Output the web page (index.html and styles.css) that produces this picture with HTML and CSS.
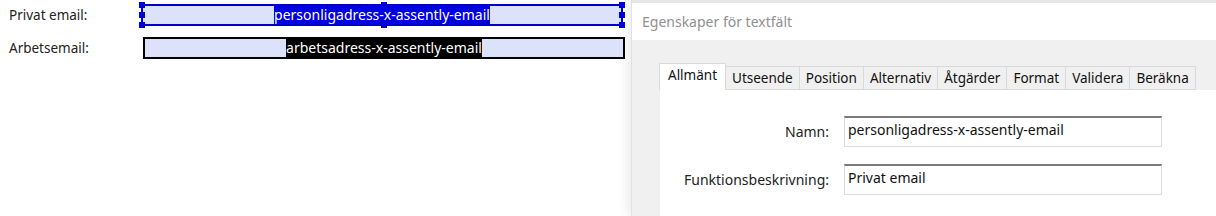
FILE: index.html
```html
<!DOCTYPE html>
<html>
<head>
  <meta charset="utf-8">
  <title>Egenskaper för textfält</title>
  <link rel="stylesheet" href="styles.css">
</head>
<body>
  <!-- Form page behind the dialog -->
  <div class="page">
    <div class="row">
      <div class="label">Privat email:</div>
      <div class="field selected">
        <span class="value sel-blue">personligadress-x-assently-email</span>
        <span class="handle h-tl"></span>
        <span class="handle h-ml"></span>
        <span class="handle h-bl"></span>
        <span class="handle h-tm"></span>
        <span class="handle h-bm"></span>
        <span class="handle h-tr"></span>
        <span class="handle h-mr"></span>
        <span class="handle h-br"></span>
      </div>
    </div>
    <div class="row">
      <div class="label">Arbetsemail:</div>
      <div class="field black">
        <span class="value sel-black">arbetsadress-x-assently-email</span>
      </div>
    </div>
  </div>

  <!-- Properties dialog -->
  <div class="dialog">
    <div class="dialog-title">Egenskaper för textfält</div>
    <div class="dialog-body">
      <div class="tabs">
        <div class="tab active">Allmänt</div>
        <div class="tab">Utseende</div>
        <div class="tab">Position</div>
        <div class="tab">Alternativ</div>
        <div class="tab">Åtgärder</div>
        <div class="tab">Format</div>
        <div class="tab">Validera</div>
        <div class="tab">Beräkna</div>
      </div>
      <div class="panel">
        <div class="prop">
          <div class="prop-label">Namn:</div>
          <div class="input">personligadress-x-assently-email</div>
        </div>
        <div class="prop">
          <div class="prop-label">Funktionsbeskrivning:</div>
          <div class="input">Privat email</div>
        </div>
      </div>
    </div>
  </div>
</body>
</html>
```
FILE: styles.css
```css
body {
  margin: 0;
  padding: 0;
  width: 1216px;
  height: 216px;
  overflow: hidden;
  display: flex;
  background-color: #fff;
  font-family: "Noto Sans", "Open Sans", sans-serif;
}

.page {
  width: 631px;
  padding-top: 4px;
  display: flex;
  flex-direction: column;
  gap: 11px;
}

.row {
  display: flex;
  align-items: center;
}

.label {
  width: 141px;
  padding-left: 9px;
  box-sizing: border-box;
  font-size: 13.5px;
  color: #222;
}

.field {
  position: relative;
  width: 482px;
  height: 22px;
  box-sizing: border-box;
  background-color: #dde2fb;
  display: flex;
  align-items: center;
  justify-content: center;
}

.field.selected {
  border: 2px solid #0000cc;
}

.field.black {
  border: 2px solid #000;
  margin-left: 2px;
}

.value {
  font-size: 14px;
  line-height: 18px;
  color: #fff;
}

.sel-blue {
  background-color: #0000e0;
}

.sel-black {
  background-color: #000;
}

.handle {
  position: absolute;
  width: 6px;
  height: 6px;
  background-color: #0000dd;
}

.h-tl { left: -4px; top: -4px; }
.h-ml { left: -4px; top: 6px; }
.h-bl { left: -4px; bottom: -4px; }
.h-tm { left: 238px; top: -4px; }
.h-bm { left: 238px; bottom: -4px; }
.h-tr { right: -4px; top: -4px; }
.h-mr { right: -4px; top: 6px; }
.h-br { right: -4px; bottom: -4px; }

.dialog {
  flex: 1;
  display: flex;
  flex-direction: column;
  background-color: #f0f0f0;
  border-left: 1px solid #e2e2e2;
  box-shadow: -4px 0 10px rgba(0, 0, 0, 0.08);
}

.dialog-title {
  height: 40px;
  flex-shrink: 0;
  background-color: #fff;
  border-top: 3px solid #e6e6e6;
  box-sizing: border-box;
  padding: 9px 0 0 10px;
  font-size: 14px;
  color: #909090;
}

.dialog-body {
  flex: 1;
  padding: 24px 0 0 27px;
}

.tabs {
  display: flex;
  align-items: flex-end;
  height: 26px;
}

.tab {
  height: 24px;
  padding: 0 6px;
  box-sizing: border-box;
  white-space: nowrap;
  font-size: 13.5px;
  line-height: 22px;
  color: #111;
  background-color: #f0f0f0;
  border: 1px solid #d9d9d9;
  border-left: none;
}

.tab.active {
  height: 27px;
  padding: 0 8px;
  background-color: #fff;
  border: 1px solid #d9d9d9;
  border-bottom: none;
}

.panel {
  background-color: #fff;
  height: 126px;
  margin-left: 1px;
  padding-top: 26px;
  box-sizing: border-box;
  display: flex;
  flex-direction: column;
  gap: 17px;
}

.prop {
  display: flex;
  align-items: center;
}

.prop-label {
  width: 169px;
  text-align: right;
  font-size: 14px;
  color: #222;
}

.input {
  margin-left: 15px;
  width: 318px;
  height: 31px;
  box-sizing: border-box;
  border: 1px solid #dcdcdc;
  border-top: 2px solid #7a7a7a;
  padding: 2px 0 0 3px;
  font-size: 14px;
  color: #111;
}
```
